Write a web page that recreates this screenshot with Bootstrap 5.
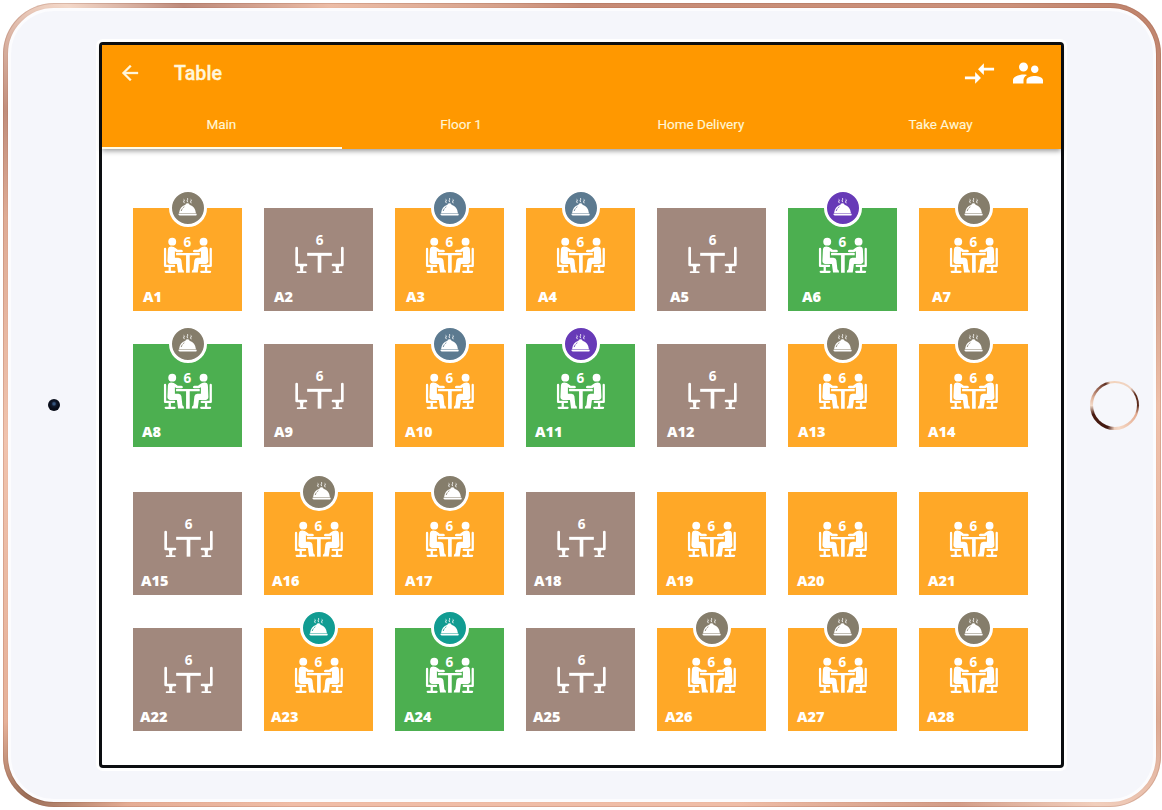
<!DOCTYPE html>
<html lang="en">
<head>
<meta charset="utf-8">
<meta name="viewport" content="width=device-width, initial-scale=1">
<title>Table</title>
<link href="https://cdn.jsdelivr.net/npm/bootstrap@5.3.0/dist/css/bootstrap.min.css" rel="stylesheet">
<style>
  body { width: 1162px; height: 810px; background: #fff; overflow: hidden; font-family: Roboto, "Liberation Sans", sans-serif; }
  .tablet { width: 1158px; height: 804px; margin: 3px 0 0 3px; padding: 5px; border-radius: 51px;
    background: conic-gradient(from 0deg at 50% 50%, #bf7f69 0, #c48770 13%, #b87860 15%, #c08a74 20%, #edbca5 25%, #e8b49e 31%, #d9a48d 33%, #f0cdbb 35.5%, #cd947e 38%, #edb9a2 44%, #eeb9a2 60%, #e2a78e 63.5%, #8d5f48 65.2%, #e3ab92 67%, #efc0aa 74%, #dba58e 80%, #b98371 82.5%, #f2d7c8 85.5%, #b57f70 87.5%, #eab9a2 91%, #cf9780 97%, #bf7f69 100%);
    box-shadow: inset 0 0 0 1px rgba(150,90,70,.25), inset 0 0 0 4px rgba(255,225,208,.12); }
  .face { border-radius: 46px; background: #f5f6fb; border: 3px solid #fcfcfe; }
  .bezel-start { width: 88px; padding-left: 37px; }
  .bezel-end { width: 88px; padding-left: 23px; }
  .lens { width: 12px; height: 12px; background: radial-gradient(circle at 50% 40%, #35557e 0 1px, #10182b 2.5px, #080c18 5px); }
  .home-key { width: 49px; height: 49px; margin-left: 3px; padding: 2.5px; background: conic-gradient(#f3d4bd 0, #efd3c2 12%, #5d2b1c 17%, #5b2a1b 25%, #e4ab90 31%, #f6d9c6 47%, #efd0bd 50%, #41170f 55%, #4a1c11 69%, #f3dccb 75%, #e3b79f 80%, #a4705d 86%, #5f3023 94%, #f3d4bd 97%); }
  .home-key > span { background: #f6f7fb; }
  .screen { width: 965px; height: 726px; border: 3px solid #0c0e11; border-radius: 4px; background: #fff; box-shadow: 0 0 0 3px #fff; }
  .appbar { background: #ff9800; color: #fff6dc; box-shadow: 0 2px 5px rgba(0,0,0,.4); height: 104px; }
  .bar-top { height: 56px; padding: 0 15.5px 0 16px; }
  .bar-top .back { stroke: currentColor; stroke-width: .3; }
  .bar-title { font-size: 19.7px; font-weight: 500; margin-left: 32px; line-height: 24px; padding-top: 2px; -webkit-text-stroke: .35px currentColor; }
  .tab-row { height: 48px; }
  .tab-row .nav-link { color: #fff6d6; font-size: 13.5px; line-height: 46px; height: 48px; padding: 0 1px 0 0; border-radius: 0; -webkit-text-stroke: .15px currentColor; }
  .tab-row .nav-link.active { border-bottom: 2.5px solid #fffbe9; }
  .floor { display: grid; grid-template-columns: repeat(7, 109px); column-gap: 22px; row-gap: 33px; padding-left: 31px; }
  .floor-a { padding-top: 59px; }
  .floor-b { padding-top: 45px; }
  .seat-tile { height: 103px; color: #fff; font-family: "Open Sans", "Noto Sans", sans-serif; }
  .busy { background: #ffa827; }
  .vacant { background: #a1887d; }
  .ready { background: #4caf50; }
  .scene { display: block; width: 55px; height: 48px; margin: 20px auto 0; overflow: visible; }
  .table-no { font-weight: 800; font-size: 14.5px; line-height: 20px; margin-top: 11px; }
  .floor-a .seat-tile:nth-child(n+8) .table-no { margin-top: 10px; }
  .dish { top: -19.3px; left: 35.7px; width: 38px; height: 38px; border: 3px solid #fff; padding-bottom: 2px; }
  .dish svg { width: 19px; height: 18px; }
  .grey { background: #857d6b; } .slate { background: #5c7a90; } .violet { background: #673ab7; } .teal { background: #119c92; }
</style>
</head>
<body>
<svg class="d-none" xmlns="http://www.w3.org/2000/svg">
  <!-- one diner on a chair, facing right; mirrored for the opposite seat -->
  <symbol id="diner" viewBox="0 0 165 129" overflow="visible">
    <circle cx="35.500" cy="28" r="11.800"/>
    <path d="M14 50V101H41M28 102V117M16 118.500H42.500" fill="none" stroke="currentColor" stroke-width="6.800" stroke-linecap="round" stroke-linejoin="round"/>
    <path d="M22.500 52Q23 42.500 33 42.500Q41 42.500 45 47L52 52.500H63Q67.500 53.500 67.500 56.500T63 60H49L43.500 57V76H54Q62 77 63 84L66 111Q71 113 71 120.800H53L49.500 95H30Q21 94 21 86Z"/>
  </symbol>
  <symbol id="occupied" viewBox="0 0 165 129">
    <use href="#diner" width="165" height="129"/>
    <use href="#diner" width="165" height="129" transform="translate(165 0) scale(-1 1)"/>
    <path d="M47 62H118V68.500H88V121H77V68.500H47Z"/>
  </symbol>
  <symbol id="free" viewBox="0 0 165 129">
    <g fill="none" stroke="currentColor" stroke-width="8" stroke-linecap="round" stroke-linejoin="round">
      <path d="M14 45V96H42M151 45V96H123" stroke-width="8"/>
      <path d="M50 64H115" stroke-width="9" stroke-linecap="square"/>
      <path d="M82.500 65V119" stroke-width="11" stroke-linecap="butt"/>
      <path d="M17 117.500H41M124 117.500H148" stroke-width="5.500"/>
    </g>
    <path d="M22 98H36Q33.500 101 33.500 107V116H24.500V107Q24.500 101 22 98ZM129 98H143Q140.500 101 140.500 107V116H131.500V107Q131.500 101 129 98Z"/>
  </symbol>
  <symbol id="cloche" viewBox="0 0 54 51">
    <path d="M1 45H53V48Q52 50 49 50H5Q1 50 1 45ZM3 43Q5 24 21 19Q23 15 27 15T33 19Q49 24 51 43Z"/>
    <path d="M9 37Q12 28 18 25" fill="none" stroke="var(--c)" stroke-width="2.500" stroke-dasharray="8 2.500"/>
    <path d="M18 14Q14 11 17 8T17 4M27 11Q24 8 27 5T27 1M37 14Q34 11 37 8T37 4" fill="none" stroke="currentColor" stroke-width="2.500" stroke-linecap="round"/>
  </symbol>
</svg>

<div class="tablet">
  <div class="face d-flex align-items-center h-100">
    <div class="bezel-start"><div class="lens rounded-circle"></div></div>
    <main class="screen d-flex flex-column flex-shrink-0">
      <header class="appbar flex-shrink-0">
        <div class="bar-top d-flex align-items-center">
          <svg class="back" width="24" height="24" viewBox="0 0 24 24" fill="currentColor"><path d="M20 11H7.830l5.590-5.590L12 4l-8 8 8 8 1.410-1.410L7.830 13H20v-2z"/></svg>
          <div class="bar-title">Table</div>
          <div class="ms-auto d-flex align-items-center text-white">
            <svg width="35" height="35" viewBox="0 0 24 24" fill="currentColor" style="margin-right:13px"><path d="M9.010 14H2v2h7.010v3L13 15l-3.990-4v3zm5.980-1v-3H22V8h-7.010V5L11 9l3.990 4z"/></svg>
            <svg width="36" height="36" viewBox="0 0 24 24" fill="currentColor"><path d="M16.500 12c1.380 0 2.490-1.120 2.490-2.500S17.880 7 16.500 7C15.120 7 14 8.120 14 9.500s1.120 2.500 2.500 2.500zM9 11c1.660 0 2.990-1.340 2.990-3S10.660 5 9 5C7.340 5 6 6.340 6 8s1.340 3 3 3zm7.500 3c-1.830 0-5.500.920-5.500 2.750V19h11v-2.250c0-1.830-3.670-2.750-5.500-2.750zM9 13c-2.330 0-7 1.170-7 3.500V19h7v-2.250c0-.850.330-2.340 2.370-3.470C10.500 13.100 9.660 13 9 13z"/></svg>
          </div>
        </div>
        <nav class="tab-row nav nav-justified">
          <a class="nav-link active">Main</a>
          <a class="nav-link">Floor 1</a>
          <a class="nav-link">Home Delivery</a>
          <a class="nav-link">Take Away</a>
        </nav>
      </header>
      <section class="floor floor-a" id="upper"></section>
      <section class="floor floor-b" id="lower"></section>
    </main>
    <div class="bezel-end"><div class="home-key rounded-circle"><span class="d-block w-100 h-100 rounded-circle"></span></div></div>
  </div>
</div>

<script src="https://cdn.jsdelivr.net/npm/bootstrap@5.3.0/dist/js/bootstrap.bundle.min.js"></script>
<script>
  // state, dish badge, label inset
  const tables = [
    ['busy','grey',10],['vacant','',10],['busy','slate',11],['busy','slate',12],['vacant','',13],['ready','violet',14],['busy','grey',13],
    ['ready','grey',9],['vacant','',10],['busy','slate',10],['ready','violet',9],['vacant','',10],['busy','grey',10],['busy','grey',9],
    ['vacant','',8],['busy','grey',8],['busy','grey',10],['vacant','',8],['busy','',9],['busy','',9],['busy','',9],
    ['vacant','',7],['busy','teal',7],['ready','teal',9],['vacant','',7],['busy','grey',8],['busy','grey',9],['busy','grey',8]
  ];
  const tones = { grey: '#857d6b', slate: '#5c7a90', violet: '#673ab7', teal: '#119c92' };
  tables.forEach(([state, dish, inset], i) => {
    const free = state === 'vacant';
    const shift = i === 15 || i === 16 ? 6 : 0;
    const badge = dish ? `<span class="dish ${dish} position-absolute rounded-circle d-flex align-items-center justify-content-center" style="--c:${tones[dish]};padding-left:${shift}px"><svg fill="currentColor"><use href="#cloche"/></svg></span>` : '';
    const nudge = free ? 'translate(1 0)' : 'translate(.4 -.7)';
    document.getElementById(i < 14 ? 'upper' : 'lower').insertAdjacentHTML('beforeend',
      `<div class="seat-tile ${state} position-relative d-flex flex-column">${badge}
        <svg class="scene" viewBox="0 -5 55 48" fill="currentColor"><g transform="${nudge}"><use href="#${free ? 'free' : 'occupied'}" width="55" height="43"/><text x="${free ? 27.5 : 27}" y="${free ? 12 : 14.8}" text-anchor="middle" font-size="13.5" font-weight="700">6</text></g></svg>
        <div class="table-no" style="padding-left:${inset}px">A${i + 1}</div>
      </div>`);
  });
</script>
</body>
</html>
